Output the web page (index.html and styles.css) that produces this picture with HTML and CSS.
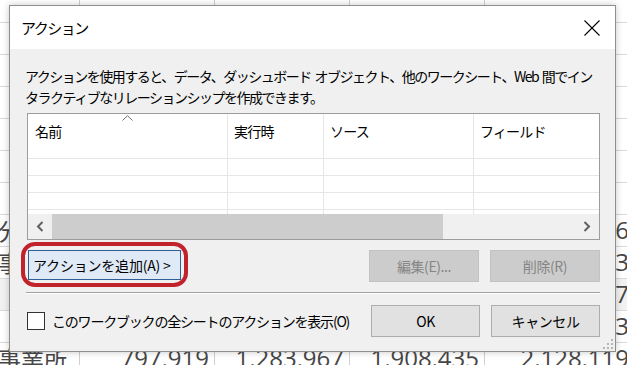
FILE: index.html
```html
<!DOCTYPE html>
<html lang="ja">
<head>
<meta charset="utf-8">
<title>アクション</title>
<link rel="stylesheet" href="styles.css">
</head>
<body>
<div class="sheet">
  <div class="srow first"><div></div><div></div><div></div><div></div><div></div></div>
  <div class="srow"><div></div><div></div><div></div><div></div><div></div></div>
  <div class="srow"><div></div><div></div><div></div><div></div><div></div></div>
  <div class="srow"><div></div><div></div><div></div><div></div><div></div></div>
  <div class="srow"><div></div><div></div><div></div><div></div><div></div></div>
  <div class="srow"><div></div><div></div><div></div><div></div><div></div></div>
  <div class="srow"><div></div><div></div><div></div><div></div><div></div></div>
  <div class="srow"><div class="lab">分類</div><div>512,330</div><div>843,120</div><div>1,204,557</div><div>1,530,246</div></div>
  <div class="srow"><div class="lab">事業部</div><div>604,118</div><div>962,404</div><div>1,411,290</div><div>1,822,903</div></div>
  <div class="srow alt"><div class="lab"></div><div>455,271</div><div>702,815</div><div>1,036,442</div><div>1,377,657</div></div>
  <div class="srow"><div class="lab"></div><div>688,905</div><div>1,101,736</div><div>1,640,210</div><div>1,995,583</div></div>
  <div class="srow"><div class="lab">事業所</div><div>797,919</div><div>1,283,967</div><div>1,908,435</div><div>2,128,119</div></div>
</div>

<div class="dialog">
  <div class="titlebar">
    <span class="title">アクション</span>
    <svg class="close" width="16" height="16" viewBox="0 0 16 16"><path d="M0.5 0.5 L15.5 15.5 M15.5 0.5 L0.5 15.5" stroke="#000" stroke-width="1.1" fill="none"/></svg>
  </div>
  <div class="body">
    <p class="desc">アクションを使用すると、データ、ダッシュボード オブジェクト、他のワークシート、Web 間でイン<br>タラクティブなリレーションシップを作成できます。</p>
    <div class="list">
      <div class="grid">
        <div class="lrow head">
          <div class="sortcol">名前<svg class="caret" width="11" height="6" viewBox="0 0 11 6"><path d="M0.5 5.5 L5.5 0.7 L10.5 5.5" stroke="#707070" stroke-width="1" fill="none"/></svg></div>
          <div>実行時</div>
          <div>ソース</div>
          <div>フィールド</div>
        </div>
        <div class="lrow"><div></div><div></div><div></div><div></div></div>
        <div class="lrow"><div></div><div></div><div></div><div></div></div>
        <div class="lrow"><div></div><div></div><div></div><div></div></div>
        <div class="lrow"><div></div><div></div><div></div><div></div></div>
        <div class="fill"><div></div><div></div><div></div><div></div></div>
      </div>
      <div class="hscroll">
        <span class="arrow"><svg width="8" height="11" viewBox="0 0 8 11"><path d="M6.5 1 L2 5.5 L6.5 10" stroke="#606060" stroke-width="2" fill="none"/></svg></span>
        <div class="track"><div class="thumb" style="width:74.7%"></div></div>
        <span class="arrow"><svg width="8" height="11" viewBox="0 0 8 11"><path d="M1.5 1 L6 5.5 L1.5 10" stroke="#606060" stroke-width="2" fill="none"/></svg></span>
      </div>
    </div>
    <div class="btnrow">
      <div class="ring-wrap"><div class="btn add">アクションを追加(A)&nbsp;&gt;</div></div>
      <div class="spacer"></div>
      <div class="btn disabled">編集(E)...</div>
      <div class="btn disabled">削除(R)</div>
    </div>
    <div class="sep"></div>
    <div class="btnrow bottom">
      <div class="check"><span class="box"></span><span class="label">このワークブックの全シートのアクションを表示(O)</span></div>
      <div class="spacer"></div>
      <div class="btn std">OK</div>
      <div class="btn std">キャンセル</div>
    </div>
  </div>
  <svg class="grip" width="10" height="10" viewBox="0 0 10 10" fill="#b5b5b5">
    <rect x="8" y="0" width="2" height="2"/>
    <rect x="4" y="4" width="2" height="2"/><rect x="8" y="4" width="2" height="2"/>
    <rect x="0" y="8" width="2" height="2"/><rect x="4" y="8" width="2" height="2"/><rect x="8" y="8" width="2" height="2"/>
  </svg>
</div>
</body>
</html>
```

FILE: styles.css
```css
html, body {
  margin: 0;
  padding: 0;
}
body {
  width: 627px;
  height: 365px;
  overflow: hidden;
  position: relative;
  background: #ffffff;
  font-family: "Noto Sans CJK JP", "Noto Sans", sans-serif;
  color: #000;
}

/* background spreadsheet */
.sheet {
  display: flex;
  flex-direction: column;
}
.srow {
  display: grid;
  grid-template-columns: 80px 135px 135px 135px 150px;
  height: 32px;
  flex: none;
  box-sizing: border-box;
  border-bottom: 1px solid #d9d9d9;
  font-family: "Open Sans", "Noto Sans", sans-serif;
  font-size: 24px;
  line-height: 30px;
  color: #474747;
}
.srow.first { height: 23px; }
.srow.alt { background: #f2f2f2; }
.srow > div {
  border-right: 1px solid #d0d0d0;
  text-align: right;
  padding-right: 5px;
  white-space: nowrap;
  overflow: hidden;
}
.srow > div.lab {
  text-align: left;
  padding: 0;
  font-family: "Noto Sans CJK JP", sans-serif;
  font-size: 23px;
  margin-left: -2px;
}

/* dialog */
.dialog {
  position: absolute;
  left: 9px;
  top: 5px;
  width: 607px;
  height: 347px;
  box-sizing: border-box;
  border: 1px solid #8e8e8e;
  background: #f0f0f0;
  box-shadow: 0 0 7px rgba(0, 0, 0, 0.22);
  display: flex;
  flex-direction: column;
}
.titlebar {
  height: 43px;
  flex: none;
  background: #ffffff;
  display: flex;
  align-items: center;
  justify-content: space-between;
  padding: 0 15px 0 11px;
}
.title {
  font-size: 15px;
  letter-spacing: -1.5px;
}
.close { display: block; }

.body {
  flex: 1;
  padding: 17px 15px 0 15px;
  display: flex;
  flex-direction: column;
}
.desc {
  margin: 0;
  font-size: 14px;
  line-height: 21px;
  letter-spacing: -1.5px;
  word-spacing: 2px;
  white-space: nowrap;
}

.list {
  margin: 5px 0 0 2px;
  height: 127px;
  box-sizing: border-box;
  border: 1px solid #9c9c9c;
  background: #ffffff;
  display: flex;
  flex-direction: column;
}
.grid {
  flex: 1;
  display: flex;
  flex-direction: column;
}
.lrow, .fill {
  display: grid;
  grid-template-columns: 200px 96px 150px 1fr;
  height: 17px;
  flex: none;
}
.lrow > div, .fill > div {
  border-right: 1px solid #e6e6e6;
  box-sizing: border-box;
}
.lrow > div {
  border-bottom: 1px solid #e6e6e6;
}
.lrow > div:last-child, .fill > div:last-child { border-right: none; }
.fill { flex: 1; height: auto; }
.lrow.head { height: 28px; }
.lrow.head > div {
  border-bottom: none;
  font-size: 14px;
  line-height: 28px;
  padding: 3px 0 0 6px;
  letter-spacing: -0.8px;
}
.lrow.head > .sortcol { position: relative; padding-left: 7px; }
.caret {
  position: absolute;
  left: 94px;
  top: 1px;
}

.hscroll {
  height: 25px;
  flex: none;
  background: #f0f0f0;
  display: flex;
}
.arrow {
  width: 24px;
  display: flex;
  align-items: center;
  justify-content: center;
}
.track {
  flex: 1;
  display: flex;
}
.thumb {
  background: #cdcdcd;
}

.btnrow {
  display: flex;
  align-items: flex-start;
  gap: 11px;
  margin-top: 10px;
  flex: none;
}
.spacer { flex: 1; }
.btn {
  box-sizing: border-box;
  height: 32px;
  width: 110px;
  border: 1px solid #adadad;
  background: #e1e1e1;
  display: flex;
  align-items: center;
  justify-content: center;
  font-size: 14px;
  letter-spacing: -0.4px;
  white-space: nowrap;
}
.ring-wrap {
  position: relative;
  margin-left: 3px;
}
.ring-wrap::after {
  content: "";
  position: absolute;
  left: -7px;
  right: -7px;
  top: -8px;
  bottom: -7px;
  border: 4px solid #c1232d;
  border-radius: 14px;
}
.btn.add {
  width: 153px;
  height: 30px;
  background: #dfeaf6;
  border-color: #2e5f97;
  justify-content: flex-start;
  padding-left: 4px;
  letter-spacing: -0.2px;
}
.btn.disabled {
  background: #cccccc;
  border-color: #c2c2c2;
  color: #858585;
}

.sep {
  margin: 10px 0 0 1px;
  height: 0;
  border-top: 1px solid #a0a0a0;
  border-bottom: 1px solid #ffffff;
  flex: none;
}

.btnrow.bottom {
  margin-top: 11px;
  align-items: center;
}
.check {
  display: flex;
  align-items: center;
  margin-left: 2px;
}
.box {
  width: 18px;
  height: 18px;
  box-sizing: border-box;
  border: 1px solid #333333;
  background: #ffffff;
  margin-right: 7px;
}
.label {
  font-size: 14px;
  letter-spacing: -1.2px;
  white-space: nowrap;
}
.btn.std { height: 32px; }

.grip {
  position: absolute;
  right: 2px;
  bottom: 2px;
}
```
